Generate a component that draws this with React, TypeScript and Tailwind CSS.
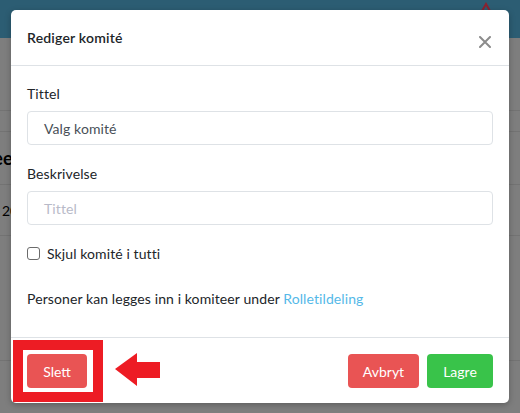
const font = { fontFamily: 'Lato, "Open Sans", sans-serif' };

const bgRows = [
  { h: 'h-[21px]', text: '' },
  { h: 'h-[53px]', text: 'Komiteer' },
  { h: 'h-[51px]', text: '2020' },
];

const CloseIcon = () => (
  <svg width="12" height="12" viewBox="0 0 12 12" className="text-[#8c8c8c]">
    <path d="M1 1 L11 11 M11 1 L1 11" stroke="currentColor" strokeWidth="2" strokeLinecap="round" />
  </svg>
);

const Field = ({ label, value, placeholder }: { label: string; value?: string; placeholder?: string }) => (
  <div className="mb-[18px]">
    <div className="text-[14px] leading-[21px] text-[#212529] mb-[7px] tracking-[0.1px]">{label}</div>
    <div className="h-[34px] border border-[#dee2e6] rounded-[4px] flex items-center px-4 text-[14px] tracking-[0.1px]">
      {value ? (
        <span className="text-[#495057]">{value}</span>
      ) : (
        <span className="text-[#b8bac8]">{placeholder}</span>
      )}
    </div>
  </div>
);

export default function App() {
  return (
    <div className="relative w-[520px] h-[413px] overflow-hidden bg-[#7e7e7e]" style={font}>
      {/* page behind the backdrop */}
      <div className="h-[38px] bg-[#2c5d73]" />
      <div className="mt-[72px] border-t border-[#737373]">
        {bgRows.map((r, i) => (
          <div key={i} className={`${r.h} border-b border-[#737373] flex items-center`}>
            {i === 1 && <span className="ml-[-55px] text-[18px] font-bold text-black">{r.text}</span>}
            {i === 2 && <span className="ml-[2px] text-[14px] text-black">{r.text}</span>}
          </div>
        ))}
        <div className="h-[125px] border-b border-[#737373]" />
      </div>

      {/* peeking icon in the nav */}
      <svg className="absolute left-[481px] top-[2px]" width="10" height="10" viewBox="0 0 10 10">
        <path d="M1 9 L5 2 L9 9" fill="none" stroke="#8b2230" strokeWidth="2" />
      </svg>

      {/* modal */}
      <div className="absolute left-[11px] top-[10px] w-[498px] h-[393px] bg-white rounded-[5px] shadow-[0_2px_6px_rgba(0,0,0,0.25)] flex flex-col">
        <div className="h-[56px] border-b border-[#dee2e6] flex items-start justify-between px-4 pt-[17px]">
          <h5 className="text-[14px] font-semibold text-[#212529] leading-[21px] tracking-[0.2px]">Rediger komité</h5>
          <div className="mt-[9px] mr-[2px]">
            <CloseIcon />
          </div>
        </div>

        <div className="flex-1 px-4 pt-[17px]">
          <Field label="Tittel" value="Valg komité" />
          <Field label="Beskrivelse" placeholder="Tittel" />
          <label className="flex items-center gap-[7px] mt-[1px] text-[14px] leading-[21px] text-[#212529] tracking-[0.1px]">
            <span className="w-[13px] h-[13px] border border-[#6b6b6b] rounded-[3px]" />
            Skjul komité i tutti
          </label>
          <p className="mt-[24px] text-[14px] leading-[21px] text-[#212529] tracking-[0.1px]">
            Personer kan legges inn i komiteer under <span className="text-[#55b9e8]">Rolletildeling</span>
          </p>
        </div>

        <div className="h-[66px] border-t border-[#dee2e6] flex items-start justify-between px-4 pt-4">
          <button className="h-[34px] w-[60px] rounded-[4px] bg-[#e95454] text-white text-[14px]">Slett</button>
          <div className="flex gap-2">
            <button className="h-[34px] w-[71px] rounded-[4px] bg-[#e95454] text-white text-[14px]">Avbryt</button>
            <button className="h-[34px] w-[66px] rounded-[4px] bg-[#39c34a] text-white text-[14px]">Lagre</button>
          </div>
        </div>
      </div>

      {/* annotation */}
      <div className="absolute left-[13px] top-[340px] w-[90px] h-[62px] border-[10px] border-[#ed1c24]" />
      <svg className="absolute left-[115px] top-[352px]" width="46" height="35" viewBox="0 0 46 35">
        <polygon points="0,17 22,1 22,10 45,10 45,26 22,26 22,34" fill="#ed1c24" />
      </svg>
    </div>
  );
}
